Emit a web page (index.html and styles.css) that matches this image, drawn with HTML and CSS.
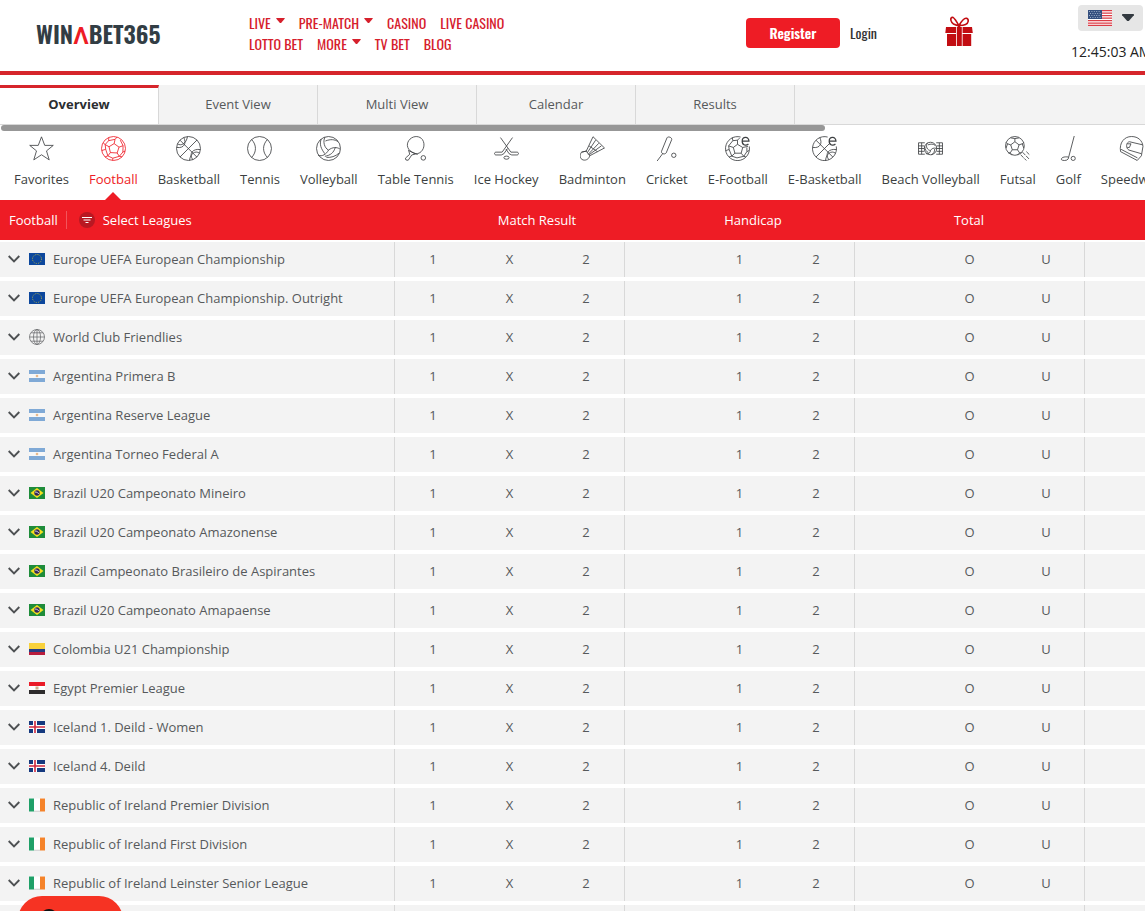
FILE: index.html
```html
<!DOCTYPE html>
<html lang="en">
<head>
<meta charset="utf-8">
<title>WINABET365 - Sports Overview</title>
<link rel="stylesheet" href="styles.css">
</head>
<body>
<svg class="sprite" aria-hidden="true">
  <symbol id="caret" viewBox="0 0 10 6"><path d="M0 0h10v1L5.700 6h-1.400L0 1z" fill="currentColor"/></symbol>
  <symbol id="chevron" viewBox="0 0 12 8"><path d="M.7 1 6 6.300 11.300 1" fill="none" stroke="currentColor" stroke-width="1.900"/></symbol>
  <symbol id="star" viewBox="0 0 24 24"><path d="M12 .8 15.100 9h8.200l-6.500 5.300 2.600 8.600L12 18l-7.400 4.900 2.600-8.600L.7 9h8.200z"/></symbol>
  <symbol id="football" viewBox="0 0 24 24"><circle cx="12" cy="12" r="11.500"/><path d="m12.600 7.300 4.700 3.400-1.800 5.600-6.500-.4-1.300-5.600zM12.600 7.300l.9-4.100M17.300 10.700l3.900-1.400M15.500 16.300l2.100 3.200M9 15.900l-2.400 3.200M7.700 10.300 4 8.200M7.500 1.500l-.2 3L13.500 3.200l2-2.200M7.300 4.500 4 8.200l.5 4.600L.6 14M4.500 12.800l2.100 6.300-2.600.9M6.600 19.100l4.700 2.200 6.300-1.800 2.500.5M17.600 19.500l3.400-4.100.2-6.100L18.500 4M21 15.400l2.200-.9M11.300 21.300v2.200M4 8.200 2 6.500"/></symbol>
  <symbol id="basketball" viewBox="0 0 24 24"><circle cx="12" cy="12" r="11.500"/><path d="M3.800 4 20 20.200M20.200 3.800 3.800 20.200M7.500 1.500c2.700 5.500.4 10.500-6.800 9.500M1.500 7.500c3 2.400 8.500 0 9.500-7M23.400 13c-7-1-11.400 3.400-7.400 9.700M22.500 16.500c-4-3-8.900.5-9.500 7"/></symbol>
  <symbol id="tennis" viewBox="0 0 24 24"><circle cx="12" cy="12" r="11.500"/><path d="M4.500 3.500c4.800 5 4.800 12 0 17M19.500 3.500c-4.800 5-4.800 12 0 17"/></symbol>
  <symbol id="volleyball" viewBox="0 0 24 24"><circle cx="12" cy="12" r="11.500"/><path d="M8.500 1.200C6.500 5.500 8 11.500 12 13.500c4-3 8-3 11-1M12 13.500c-2 4-6 6.500-10 5M9 4.800c5-2 9-1.500 12 .5M5 3c-2 5 0 9.500 3.500 14M22 16.500c-3 3-8 4.500-12 4M18.500 11c-1.500 5-4.500 7.500-10 8.500"/></symbol>
  <symbol id="tabletennis" viewBox="0 0 24 24"><path d="M8.500 15.500C3 12 3.200 6.500 6.700 3c4-3.700 9.500-3 12 .5 2.800 4.400 1.300 10-2.500 12.500-2.700 1.700-5 1.200-7.700-.5zM5 13.800l9 4M5.500 14.200l1 3.300-4.200 3.800.5 1.700 2.200.3 3.400-5.100 3.700-.9"/><circle cx="19.500" cy="21" r="2.200"/></symbol>
  <symbol id="hockey" viewBox="0 0 24 24"><path d="m6.200 1.500 10 14h5.800c2 0 2 2.700 0 2.700h-5L14.500 17 11.500 12.500M17.800 1.500l-10 14H2c-2 0-2 2.700 0 2.700h5L9.500 17l3.500-5"/><ellipse cx="12" cy="20.800" rx="2.500" ry="1.500"/></symbol>
  <symbol id="badminton" viewBox="0 0 24 24"><path d="M1.500 15.500C-.5 18-.3 22 3 23c3 .8 5.800-1.300 6.300-4L23.500 11.500 12.500.7 6 14.500zM6 14.500l3.300 4.500M1.500 15.500 6 14.500M15 4 7 16M18 7 8 17.500M20.500 9.500 8.700 18M8.700 9.500l8 5.500"/></symbol>
  <symbol id="cricket" viewBox="0 0 24 24"><path d="M12.500 1.700c1-1.700 5-.3 4.500 1.800l-5.300 12.700c-1.500 2-5 .8-4.500-1.500zM8.500 16.700 3 24"/><circle cx="19" cy="18.500" r="2.100"/></symbol>
  <symbol id="letter-e" viewBox="0 0 24 24"><path d="M16.500 5h6.500c0-5-6.500-4.500-6.500 0 0 4.300 4 4.500 6 2.700" stroke-width="1.200"/></symbol>
  <symbol id="efootball" viewBox="0 0 24 24"><path d="M15 1a11.500 11.500 0 1 0 8.300 9"/><path d="m12 8 5 3-1.500 5.500h-6L8 11zM12 8V4l2-2M17 11l5-1M15.500 16.500l2.500 3M9.500 16.500l-3 2.800M8 11 3.500 9.500M7 1.500l.5 3L12 4M7.500 4.500l-4 5L4 13 .6 14M4 13l2.500 6.300L4 20M6.500 19.300l5 1.700 6.500-1.500 2 .5M18 19.500l3-4.500 2-1M21 15v-4"/></symbol>
  <symbol id="ebasketball" viewBox="0 0 24 24"><path d="M15 1a11.500 11.500 0 1 0 8.300 9M3.800 4 20 20.200M16.500 7.500 3.800 20.200M7.500 1.500c2.700 5.500.4 10.500-6.800 9.500M23.400 13c-7-1-11.400 3.400-7.400 9.700M22.500 16.500c-4-3-8.900.5-9.500 7"/></symbol>
  <symbol id="beach" viewBox="0 0 24 24"><path d="M6.500 6.500H.5v11h6M17.500 6.500h6v11h-6M.5 9.500H6M.5 12H6M.5 14.700H6M3.500 6.500v11M18 9.500h5.500M18 12h5.500M18 14.700h5.500M20.500 6.500v11"/><circle cx="12" cy="12" r="6"/><path d="M9 6.500c-2 4 0 7 3 7.500 0 2-2 3.500-4.500 3M12 14c1-2 3-3 6-2M9.500 8.500c3-1 5-1 7 .5M6.500 10c0 3 1.500 5 3.500 6M13 18c2-1 3-3 3-5.500"/></symbol>
  <symbol id="futsal" viewBox="0 0 24 24"><circle cx="9.500" cy="9.500" r="9"/><path d="m9.500 5.500 4 3-1.500 4.700H7L5.500 8.500zM9.500 5.500v-3M13.500 8.500l3-1M12 13.200l2 3M7 13.200l-2 3M5.500 8.500l-3-1M5.500 1.800l4 .7 4-.7M1 6l1.500 1.500-1.500 4M18 6l-1.500 1.500 1.500 4M3 16.200l2 0 2 2M16 16.200l-2 0-2 2"/><path d="m20.500 15 3 3M16.800 15.500l6.500 6.800M15 18l5.500 5.500" stroke-dasharray="4 1"/></symbol>
  <symbol id="golf" viewBox="0 0 24 24"><path d="M17.500 0 11.700 22c-.8 2-6 1.800-6.500.7-.5-1.800 2.300-3.200 6.800-2.500"/><circle cx="16.500" cy="21.500" r="2"/></symbol>
  <symbol id="helmet" viewBox="0 0 24 24"><path d="M1.500 15C0 6.500 5 .5 12 .5c6.500 0 10.500 4 11 9.500l-1.500 9-4 4.500L1.500 15zM2 12.800l15.700 8.200M22.800 8.500 10 5.500C6.500 6 6.500 12 9.500 13.500l12 3.500M8 7.500h3.500L10 11H8"/></symbol>
  <symbol id="filter" viewBox="0 0 16 16"><circle cx="8" cy="8" r="8" fill="#b91822"/><path d="M3 5.500h10M4.500 8h7M6.500 10.500h3" stroke="#fff" stroke-width="1.200"/></symbol>
  <symbol id="gift" viewBox="0 0 28 31"><g fill="#c20d12"><path d="M1 11h10v6H.3zM11.800 11h5v19h-5zM17.600 11H27l.8 6H17.600zM2 18h9v12H2zM17.600 18h8.600v12h-8.600z"/></g><g fill="none" stroke="#c20d12" stroke-width="1.600"><path d="M14 9.500C12 7 9.500 1 7.300 1.300 4.500 2.200 6 6.500 8.500 8c2 1 3.500 1.500 5.500 1.500zM14 9.500C16 6 19 1.500 21.500 2.300c2.800 1 2 5-1 6.200-2 1-4.500 1-6.500 1z"/></g><circle cx="14" cy="9.500" r="1.700" fill="#c20d12"/></symbol>
  <symbol id="us" viewBox="0 0 24 16"><path fill="#fff" d="M0 0h24v16H0z"/><path stroke="#dc3b46" stroke-width="1.250" d="M0 .6h24M0 3.100h24M0 5.600h24M0 8.100h24M0 10.600h24M0 13.100h24M0 15.400h24"/><path fill="#35507f" d="M0 0h14v9H0z"/><path stroke="#b9c7dc" stroke-width=".8" stroke-dasharray="1 1.400" d="M1 1.500h12M2 3.500h11M1 5.500h12M2 7.500h11"/></symbol>
  <symbol id="eu" viewBox="0 0 16 12"><path fill="#0c479d" d="M0 0h16v12H0z"/><circle cx="8" cy="6" r="4.500" fill="none" stroke="#a5a84d" stroke-width="1" stroke-dasharray="1.150 1.200"/></symbol>
  <symbol id="world" viewBox="0 0 16 16"><g fill="none" stroke="#6d6f71" stroke-width=".8"><circle cx="8" cy="8" r="7.500"/><ellipse cx="8" cy="8" rx="3.500" ry="7.500"/><path d="M8 .5v15M.5 8h15M2 3.800h12M2 12.200h12"/></g></symbol>
  <symbol id="ar" viewBox="0 0 16 12"><path fill="#f7f7f7" d="M0 0h16v12H0z"/><path fill="#7fa9d6" d="M0 0h16v4H0zM0 8h16v4H0z"/><circle cx="8" cy="6" r="1.300" fill="#e7b98b"/></symbol>
  <symbol id="br" viewBox="0 0 16 12"><path fill="#1e8c3a" d="M0 0h16v12H0z"/><path fill="#f4e01e" d="m8 1 6.500 5L8 11 1.500 6z"/><circle cx="8" cy="6" r="2.700" fill="#34285c"/><path d="M6 5c2 0 3 1 4 2" stroke="#fff" stroke-width=".8" fill="none"/></symbol>
  <symbol id="co" viewBox="0 0 16 12"><path fill="#f8d13c" d="M0 0h16v6H0z"/><path fill="#253d83" d="M0 6h16v3H0z"/><path fill="#b81d3d" d="M0 9h16v3H0z"/></symbol>
  <symbol id="eg" viewBox="0 0 16 12"><path fill="#fff" d="M0 0h16v12H0z"/><path fill="#ea1c28" d="M0 0h16v4H0z"/><path fill="#2d2b2c" d="M0 8h16v4H0z"/><path fill="#cdb08a" d="M6.500 4.500h3v3h-3z"/></symbol>
  <symbol id="is" viewBox="0 0 16 12"><path fill="#15397f" d="M0 0h16v12H0z"/><path fill="#fff" d="M4 0h4v12H4zM0 4h16v4H0z"/><path fill="#d0283f" d="M5.200 0h1.600v12H5.200zM0 5.200h16v1.600H0z"/></symbol>
  <symbol id="ie" viewBox="0 0 16 13"><path fill="#fff" d="M0 0h16v12.500H0z"/><path fill="#1fa068" d="M0 0h5v13H0z"/><path fill="#f5832a" d="M11 0h5v13h-5z"/><path fill="#bbb" d="M5 12.300h6v.7H5z"/></symbol>
</svg>
<div class="page">
  <header class="topbar">
    <a class="logo" href="#">WIN<span class="logo-mark">Λ</span>BET365</a>
    <nav class="main-nav" aria-label="Main">
      <div class="nav-row">
        <a href="#">LIVE <svg class="caret"><use href="#caret"/></svg></a>
        <a href="#">PRE-MATCH <svg class="caret"><use href="#caret"/></svg></a>
        <a href="#">CASINO</a>
        <a href="#">LIVE CASINO</a>
      </div>
      <div class="nav-row">
        <a href="#">LOTTO BET</a>
        <a href="#">MORE <svg class="caret"><use href="#caret"/></svg></a>
        <a href="#">TV BET</a>
        <a href="#">BLOG</a>
      </div>
    </nav>
    <button class="register" type="button">Register</button>
    <button class="login" type="button">Login</button>
    <a class="gift-link" href="#" aria-label="Bonuses"><svg class="gift"><use href="#gift"/></svg></a>
    <div class="locale">
      <button class="language" type="button" aria-label="Language: English"><svg class="us-flag"><use href="#us"/></svg><svg class="language-caret"><use href="#caret"/></svg></button>
      <time class="clock">12:45:03 AM</time>
    </div>
  </header>

  <nav class="tabs" aria-label="Views">
    <a class="tab tab-active" href="#">Overview</a>
    <a class="tab" href="#">Event View</a>
    <a class="tab" href="#">Multi View</a>
    <a class="tab" href="#">Calendar</a>
    <a class="tab" href="#">Results</a>
  </nav>

  <nav class="sports" aria-label="Sports">
    <div class="scroll-thumb"></div>
    <div class="sport-list">
      <a class="sport" href="#"><svg class="sport-icon"><use href="#star"/></svg>Favorites</a>
      <a class="sport sport-active" href="#"><svg class="sport-icon"><use href="#football"/></svg>Football</a>
      <a class="sport" href="#"><svg class="sport-icon"><use href="#basketball"/></svg>Basketball</a>
      <a class="sport" href="#"><svg class="sport-icon"><use href="#tennis"/></svg>Tennis</a>
      <a class="sport" href="#"><svg class="sport-icon"><use href="#volleyball"/></svg>Volleyball</a>
      <a class="sport" href="#"><svg class="sport-icon"><use href="#tabletennis"/></svg>Table Tennis</a>
      <a class="sport" href="#"><svg class="sport-icon"><use href="#hockey"/></svg>Ice Hockey</a>
      <a class="sport" href="#"><svg class="sport-icon"><use href="#badminton"/></svg>Badminton</a>
      <a class="sport" href="#"><svg class="sport-icon"><use href="#cricket"/></svg>Cricket</a>
      <a class="sport" href="#"><svg class="sport-icon"><use href="#efootball"/><use href="#letter-e"/></svg>E-Football</a>
      <a class="sport" href="#"><svg class="sport-icon"><use href="#ebasketball"/><use href="#letter-e"/></svg>E-Basketball</a>
      <a class="sport" href="#"><svg class="sport-icon"><use href="#beach"/></svg>Beach Volleyball</a>
      <a class="sport" href="#"><svg class="sport-icon"><use href="#futsal"/></svg>Futsal</a>
      <a class="sport" href="#"><svg class="sport-icon"><use href="#golf"/></svg>Golf</a>
      <a class="sport" href="#"><svg class="sport-icon"><use href="#helmet"/></svg>Speedway</a>
    </div>
  </nav>

  <main>
    <div class="market-bar">
      <div class="market-sport">
        <span class="sport-name">Football</span>
        <button class="select-leagues" type="button"><svg class="filter"><use href="#filter"/></svg>Select Leagues</button>
      </div>
      <div class="market">Match Result</div>
      <div class="market">Handicap</div>
      <div class="market">Total</div>
    </div>
    <table class="leagues">
      <colgroup><col class="col-name"><col class="col-odd"><col class="col-odd"><col class="col-last"><col class="col-odd"><col class="col-odd"><col class="col-last"><col class="col-odd"><col class="col-odd"><col class="col-last"><col></colgroup>
      <tbody>
        <tr><th scope="row"><button class="league" type="button"><svg class="chevron"><use href="#chevron"/></svg><svg class="flag"><use href="#eu"/></svg>Europe UEFA European Championship</button></th><td class="group">1</td><td>X</td><td>2</td><td class="group"></td><td>1</td><td>2</td><td class="group"></td><td>O</td><td>U</td><td class="group"></td></tr>
        <tr><th scope="row"><button class="league" type="button"><svg class="chevron"><use href="#chevron"/></svg><svg class="flag"><use href="#eu"/></svg>Europe UEFA European Championship. Outright</button></th><td class="group">1</td><td>X</td><td>2</td><td class="group"></td><td>1</td><td>2</td><td class="group"></td><td>O</td><td>U</td><td class="group"></td></tr>
        <tr><th scope="row"><button class="league" type="button"><svg class="chevron"><use href="#chevron"/></svg><svg class="flag"><use href="#world"/></svg>World Club Friendlies</button></th><td class="group">1</td><td>X</td><td>2</td><td class="group"></td><td>1</td><td>2</td><td class="group"></td><td>O</td><td>U</td><td class="group"></td></tr>
        <tr><th scope="row"><button class="league" type="button"><svg class="chevron"><use href="#chevron"/></svg><svg class="flag"><use href="#ar"/></svg>Argentina Primera B</button></th><td class="group">1</td><td>X</td><td>2</td><td class="group"></td><td>1</td><td>2</td><td class="group"></td><td>O</td><td>U</td><td class="group"></td></tr>
        <tr><th scope="row"><button class="league" type="button"><svg class="chevron"><use href="#chevron"/></svg><svg class="flag"><use href="#ar"/></svg>Argentina Reserve League</button></th><td class="group">1</td><td>X</td><td>2</td><td class="group"></td><td>1</td><td>2</td><td class="group"></td><td>O</td><td>U</td><td class="group"></td></tr>
        <tr><th scope="row"><button class="league" type="button"><svg class="chevron"><use href="#chevron"/></svg><svg class="flag"><use href="#ar"/></svg>Argentina Torneo Federal A</button></th><td class="group">1</td><td>X</td><td>2</td><td class="group"></td><td>1</td><td>2</td><td class="group"></td><td>O</td><td>U</td><td class="group"></td></tr>
        <tr><th scope="row"><button class="league" type="button"><svg class="chevron"><use href="#chevron"/></svg><svg class="flag"><use href="#br"/></svg>Brazil U20 Campeonato Mineiro</button></th><td class="group">1</td><td>X</td><td>2</td><td class="group"></td><td>1</td><td>2</td><td class="group"></td><td>O</td><td>U</td><td class="group"></td></tr>
        <tr><th scope="row"><button class="league" type="button"><svg class="chevron"><use href="#chevron"/></svg><svg class="flag"><use href="#br"/></svg>Brazil U20 Campeonato Amazonense</button></th><td class="group">1</td><td>X</td><td>2</td><td class="group"></td><td>1</td><td>2</td><td class="group"></td><td>O</td><td>U</td><td class="group"></td></tr>
        <tr><th scope="row"><button class="league" type="button"><svg class="chevron"><use href="#chevron"/></svg><svg class="flag"><use href="#br"/></svg>Brazil Campeonato Brasileiro de Aspirantes</button></th><td class="group">1</td><td>X</td><td>2</td><td class="group"></td><td>1</td><td>2</td><td class="group"></td><td>O</td><td>U</td><td class="group"></td></tr>
        <tr><th scope="row"><button class="league" type="button"><svg class="chevron"><use href="#chevron"/></svg><svg class="flag"><use href="#br"/></svg>Brazil U20 Campeonato Amapaense</button></th><td class="group">1</td><td>X</td><td>2</td><td class="group"></td><td>1</td><td>2</td><td class="group"></td><td>O</td><td>U</td><td class="group"></td></tr>
        <tr><th scope="row"><button class="league" type="button"><svg class="chevron"><use href="#chevron"/></svg><svg class="flag"><use href="#co"/></svg>Colombia U21 Championship</button></th><td class="group">1</td><td>X</td><td>2</td><td class="group"></td><td>1</td><td>2</td><td class="group"></td><td>O</td><td>U</td><td class="group"></td></tr>
        <tr><th scope="row"><button class="league" type="button"><svg class="chevron"><use href="#chevron"/></svg><svg class="flag"><use href="#eg"/></svg>Egypt Premier League</button></th><td class="group">1</td><td>X</td><td>2</td><td class="group"></td><td>1</td><td>2</td><td class="group"></td><td>O</td><td>U</td><td class="group"></td></tr>
        <tr><th scope="row"><button class="league" type="button"><svg class="chevron"><use href="#chevron"/></svg><svg class="flag"><use href="#is"/></svg>Iceland 1. Deild - Women</button></th><td class="group">1</td><td>X</td><td>2</td><td class="group"></td><td>1</td><td>2</td><td class="group"></td><td>O</td><td>U</td><td class="group"></td></tr>
        <tr><th scope="row"><button class="league" type="button"><svg class="chevron"><use href="#chevron"/></svg><svg class="flag"><use href="#is"/></svg>Iceland 4. Deild</button></th><td class="group">1</td><td>X</td><td>2</td><td class="group"></td><td>1</td><td>2</td><td class="group"></td><td>O</td><td>U</td><td class="group"></td></tr>
        <tr><th scope="row"><button class="league" type="button"><svg class="chevron"><use href="#chevron"/></svg><svg class="flag"><use href="#ie"/></svg>Republic of Ireland Premier Division</button></th><td class="group">1</td><td>X</td><td>2</td><td class="group"></td><td>1</td><td>2</td><td class="group"></td><td>O</td><td>U</td><td class="group"></td></tr>
        <tr><th scope="row"><button class="league" type="button"><svg class="chevron"><use href="#chevron"/></svg><svg class="flag"><use href="#ie"/></svg>Republic of Ireland First Division</button></th><td class="group">1</td><td>X</td><td>2</td><td class="group"></td><td>1</td><td>2</td><td class="group"></td><td>O</td><td>U</td><td class="group"></td></tr>
        <tr><th scope="row"><button class="league" type="button"><svg class="chevron"><use href="#chevron"/></svg><svg class="flag"><use href="#ie"/></svg>Republic of Ireland Leinster Senior League</button></th><td class="group">1</td><td>X</td><td>2</td><td class="group"></td><td>1</td><td>2</td><td class="group"></td><td>O</td><td>U</td><td class="group"></td></tr>
        <tr><th scope="row"></th><td class="group"></td><td></td><td></td><td class="group"></td><td></td><td></td><td class="group"></td><td></td><td></td><td class="group"></td></tr>
      </tbody>
    </table>
  </main>
  <button class="chat" type="button" aria-label="Chat"><span class="chat-icon"></span></button>
</div>
</body>
</html>
```

FILE: styles.css
```css
* { box-sizing: border-box; }

body {
  margin: 0;
  background: #fff;
  color: #56595b;
  font: 13px/18px "Open Sans", "Noto Sans", sans-serif;
}

a { color: inherit; text-decoration: none; }

button {
  margin: 0;
  padding: 0;
  border: 0;
  background: none;
  color: inherit;
  font: inherit;
  cursor: pointer;
}

svg { display: block; flex: none; }

.sprite { position: absolute; width: 0; height: 0; }

.page {
  position: relative;
  height: 100vh;
  overflow: hidden;
}

/* Top bar */
.topbar {
  display: flex;
  align-items: center;
  height: 75px;
  padding: 0 0 5px 36px;
  border-bottom: 4px solid #d6252b;
  font-family: Oswald, Roboto, "Liberation Sans", sans-serif;
  white-space: nowrap;
}

.logo {
  width: 213px;
  color: #323d44;
  font-size: 24px;
  line-height: 28px;
  font-weight: 600;
}

.logo-mark { color: #ee1c25; }

.main-nav {
  flex: 1;
  color: #d6202c;
  font-size: 14px;
  line-height: 21px;
}

.nav-row { display: flex; gap: 14px; }
.nav-row a { display: flex; gap: 5px; }
.caret { width: 9px; height: 5px; margin-top: 6px; }

.register {
  width: 94px;
  height: 30px;
  border-radius: 4px;
  background: #ee1c25;
  color: #fff;
  font-size: 14px;
  font-weight: 600;
}

.login {
  width: 95px;
  margin-left: 10px;
  color: #333;
  font-size: 14px;
  text-align: left;
}

.gift-link { padding-bottom: 4px; }
.gift { width: 28px; height: 31px; }

.locale {
  width: 74px;
  margin-left: 98px;
  font-family: "Open Sans", "Noto Sans", sans-serif;
}

.language {
  display: flex;
  align-items: center;
  gap: 10px;
  width: 65px;
  height: 26px;
  margin: 0 0 11px 7px;
  padding: 0 10px;
  border-radius: 4px;
  background: #e6e6e6;
  color: #333a40;
}

.us-flag { width: 24px; height: 16px; }
.language-caret { width: 12px; height: 7px; }
.clock { display: block; color: #222; font-size: 14px; line-height: 20px; }

/* View tabs */
.tabs {
  display: flex;
  height: 40px;
  margin-top: 10px;
  border-bottom: 1px solid #d8d8d8;
  background: #f3f3f3;
}

.tab {
  width: 159px;
  padding: 10px 0;
  border-right: 1px solid #d8d8d8;
  text-align: center;
}

.tab-active {
  padding-top: 7px;
  border-top: 3px solid #d6252b;
  background: #fff;
  color: #2b2e30;
  font-weight: bold;
}

/* Sports */
.sports { height: 75px; }

.scroll-thumb {
  width: 72%;
  height: 6px;
  margin-left: 1px;
  border-radius: 3px;
  background: #979797;
}

.sport-list {
  display: flex;
  height: 69px;
  padding: 5px 4px 0;
}

.sport {
  position: relative;
  display: flex;
  flex: none;
  flex-direction: column;
  align-items: center;
  gap: 9px;
  padding: 0 10px;
  color: #3c3f41;
}

.sport-icon {
  width: 25px;
  height: 25px;
  fill: none;
  stroke: currentColor;
  stroke-width: 0.8;
  overflow: visible;
}

.sport-active { color: #ee1c25; }

.sport-active::after {
  content: "";
  position: absolute;
  bottom: 0;
  border: 8px solid transparent;
  border-top: 0;
  border-bottom-color: #ee1c25;
}

/* Market headings */
.market-bar {
  display: flex;
  align-items: center;
  height: 40px;
  background: #ee1c25;
  color: #fff;
}

.market-sport { display: flex; width: 429px; padding-left: 9px; }
.sport-name { padding-right: 8px; border-right: 1px solid #f2545b; }
.select-leagues { display: flex; align-items: center; gap: 8px; margin-left: 12px; }
.filter { width: 16px; height: 16px; }
.market { width: 216px; text-align: center; }

/* League table */
.leagues {
  width: 100%;
  margin-top: -2px;
  border-spacing: 0 4px;
  table-layout: fixed;
}

.col-name { width: 394px; }
.col-odd { width: 77px; }
.col-last { width: 76px; }

.leagues th,
.leagues td {
  height: 35px;
  padding: 0 0 2px;
  background: #f3f3f3;
  font-weight: normal;
  text-align: center;
}

.leagues .group { border-left: 1px solid #d8d8d8; }

.league {
  display: flex;
  align-items: center;
  width: 100%;
  padding-left: 8px;
  white-space: nowrap;
}

.chevron { width: 12px; height: 8px; margin-right: 9px; color: #4d5052; }
.flag { width: 16px; height: 16px; margin-right: 8px; }

/* Chat launcher */
.chat {
  position: absolute;
  left: 18px;
  bottom: -33px;
  width: 105px;
  height: 48px;
  padding: 13px 22px;
  border-radius: 24px;
  background: #f63323;
}

.chat-icon {
  display: block;
  width: 18px;
  height: 22px;
  border-radius: 9px;
  background: #111;
}
```
